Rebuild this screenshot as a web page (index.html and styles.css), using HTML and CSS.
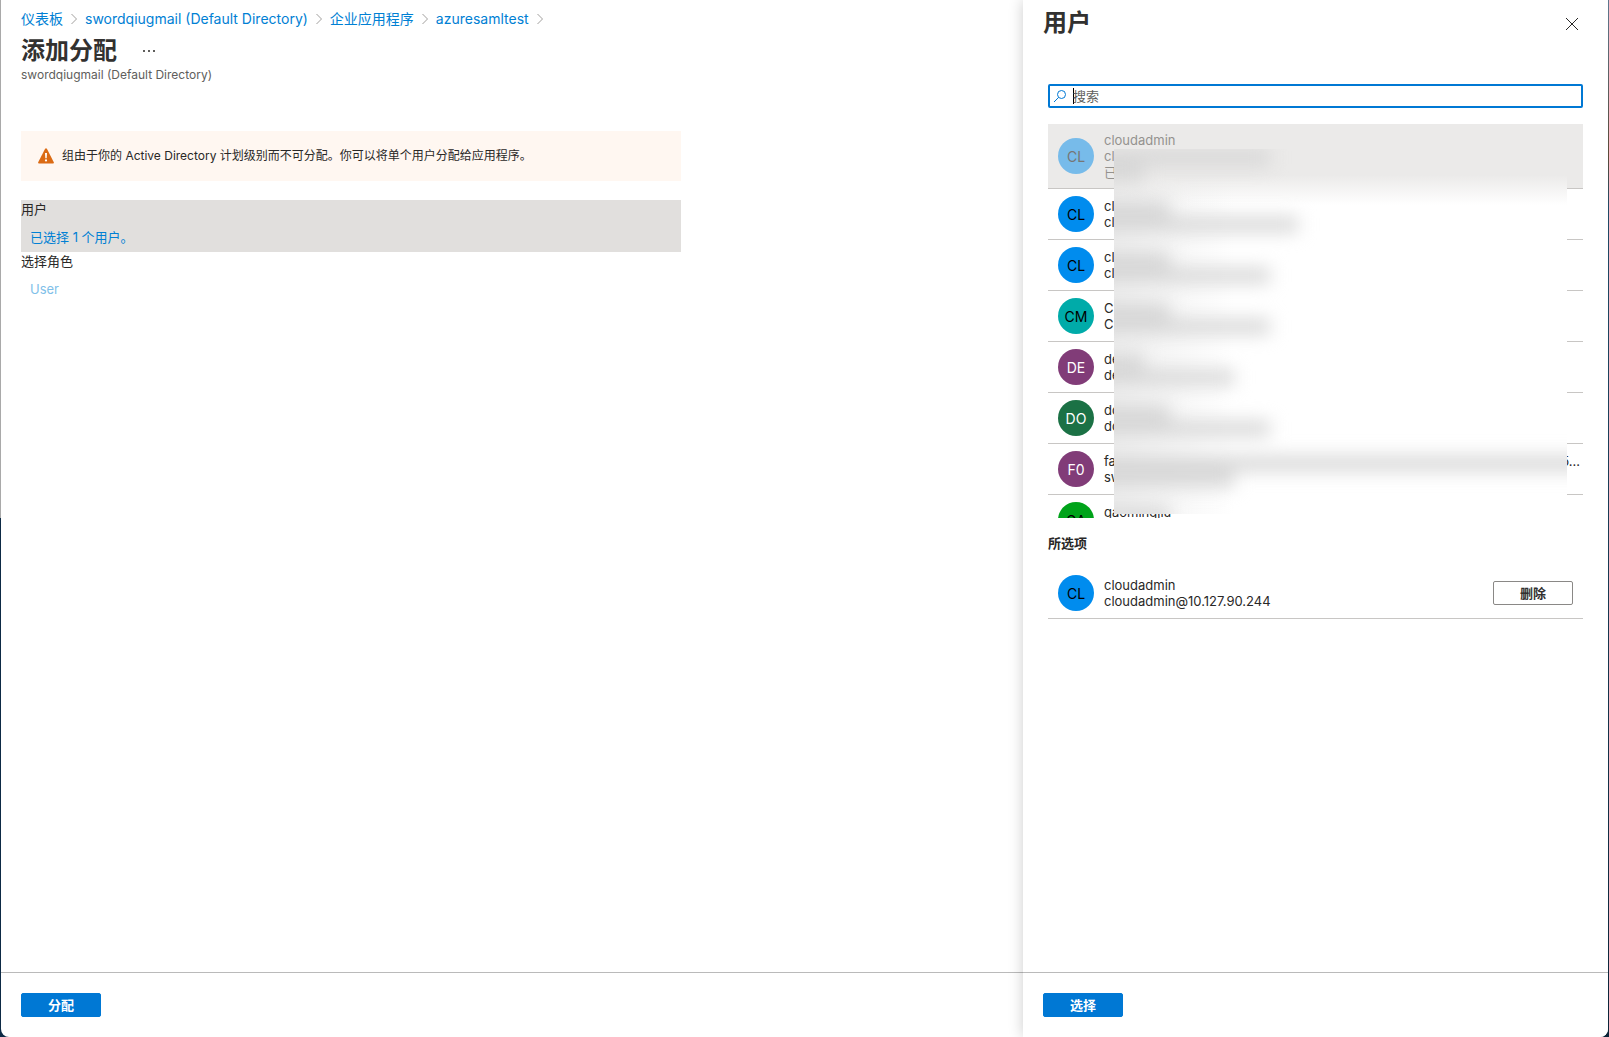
FILE: index.html
```html
<!DOCTYPE html>
<html lang="zh-CN">
<head>
    <meta charset="UTF-8">
    <meta name="viewport" content="width=device-width, initial-scale=1.0">
    <title>添加分配</title>
    <link rel="stylesheet" href="styles.css">
</head>
<body>
    <div class="window">
        <!-- Assignment blade -->
        <main class="blade">
            <nav class="breadcrumb">
                <a href="#">仪表板</a>
                <svg class="chevron" viewBox="0 0 6 12"><path d="M0.5 1L5.5 6L0.5 11"/></svg>
                <a href="#">swordqiugmail (Default Directory)</a>
                <svg class="chevron" viewBox="0 0 6 12"><path d="M0.5 1L5.5 6L0.5 11"/></svg>
                <a href="#">企业应用程序</a>
                <svg class="chevron" viewBox="0 0 6 12"><path d="M0.5 1L5.5 6L0.5 11"/></svg>
                <a href="#">azuresamltest</a>
                <svg class="chevron" viewBox="0 0 6 12"><path d="M0.5 1L5.5 6L0.5 11"/></svg>
            </nav>
            <header class="blade-header">
                <div class="title-row">
                    <h1>添加分配</h1>
                    <button class="more" type="button" aria-label="更多">
                        <svg viewBox="0 0 12 2"><path d="M0 0h2v2H0zM5 0h2v2H5zM10 0h2v2h-2z"/></svg>
                    </button>
                </div>
                <p class="subtitle">swordqiugmail (Default Directory)</p>
            </header>

            <div class="warning">
                <svg class="warning-icon" viewBox="0 0 16 16">
                    <path fill="#db6b14" d="M7.1 0.8Q8 -0.5 8.9 0.8L15.8 14.3Q16.2 15.5 15 15.5H1Q-0.2 15.5 0.2 14.3Z"/>
                    <path fill="#fff" d="M7 5h2l-0.3 5.2H7.3z"/>
                    <circle cx="8" cy="12.4" r="1.1" fill="#fff"/>
                </svg>
                <span>组由于你的 Active Directory 计划级别而不可分配。你可以将单个用户分配给应用程序。</span>
            </div>

            <section class="field selected">
                <h2>用户</h2>
                <a href="#">已选择 1 个用户。</a>
            </section>
            <section class="field disabled">
                <h2>选择角色</h2>
                <a href="#">User</a>
            </section>

            <footer class="blade-footer">
                <button class="primary" type="button">分配</button>
            </footer>
        </main>

        <!-- User picker blade -->
        <aside class="blade picker">
            <header class="picker-header">
                <h1>用户</h1>
                <button class="close" type="button" aria-label="关闭">
                    <svg viewBox="0 0 14 14"><path d="M1 1L13 13M13 1L1 13"/></svg>
                </button>
            </header>

            <div class="picker-body">
                <label class="search">
                    <svg viewBox="0 0 14 14"><circle cx="8.5" cy="5.5" r="4"/><path d="M5.6 8.4L1 13"/></svg>
                    <span class="caret"></span>
                    <input type="text" placeholder="搜索" aria-label="搜索">
                </label>

                <div class="user-list">
                    <ul>
                        <li class="user assigned">
                            <span class="avatar blue">CL</span>
                            <div class="user-text"><div>cloudadmin</div><div>cl</div><div>已</div></div>
                        </li>
                        <li class="user">
                            <span class="avatar blue">CL</span>
                            <div class="user-text"><div>cl</div><div>cl</div></div>
                        </li>
                        <li class="user">
                            <span class="avatar blue">CL</span>
                            <div class="user-text"><div>cl</div><div>cl</div></div>
                        </li>
                        <li class="user">
                            <span class="avatar teal">CM</span>
                            <div class="user-text"><div>C</div><div>C</div></div>
                        </li>
                        <li class="user">
                            <span class="avatar purple">DE</span>
                            <div class="user-text"><div>de</div><div>de</div></div>
                        </li>
                        <li class="user">
                            <span class="avatar green">DO</span>
                            <div class="user-text"><div>do</div><div>do</div></div>
                        </li>
                        <li class="user">
                            <span class="avatar purple">F0</span>
                            <div class="user-text"><div class="split"><span>fa</span><span>5...</span></div><div>sw</div></div>
                        </li>
                        <li class="user">
                            <span class="avatar lime">GA</span>
                            <div class="user-text"><div>gaomingjiu</div><div>&nbsp;</div></div>
                        </li>
                    </ul>
                    <!-- Privacy mask over names and addresses -->
                    <div class="mask" aria-hidden="true">
                        <div class="smudges">
                            <div class="smudge"><i class="w-170"></i><i class="w-50"></i></div>
                            <div class="smudge"><i class="w-70"></i><i class="w-200"></i></div>
                            <div class="smudge"><i class="w-70"></i><i class="w-170"></i></div>
                            <div class="smudge"><i class="w-70"></i><i class="w-170"></i></div>
                            <div class="smudge"><i class="w-50"></i><i class="w-140"></i></div>
                            <div class="smudge"><i class="w-70"></i><i class="w-170"></i></div>
                            <div class="smudge"><i class="w-full"></i><i class="w-140"></i></div>
                            <div class="smudge"><i class="w-70"></i></div>
                        </div>
                    </div>
                </div>

                <h2 class="picked-title">所选项</h2>
                <ul>
                    <li class="user picked">
                        <span class="avatar blue">CL</span>
                        <div class="user-text"><div>cloudadmin</div><div>cloudadmin@10.127.90.244</div></div>
                        <button class="secondary" type="button">删除</button>
                    </li>
                </ul>
            </div>

            <footer class="blade-footer">
                <button class="primary" type="button">选择</button>
            </footer>
        </aside>
    </div>
</body>
</html>
```
FILE: styles.css
```css
/* General Styles */
* {
    box-sizing: border-box;
}

body {
    margin: 0;
    font-family: Inter, "Noto Sans CJK SC", sans-serif;
    font-size: 13px;
    line-height: 16px;
    color: #292827;
    background:
        linear-gradient(#a9a9a9 50%, #0d2a45 50%) left / 50% 100% no-repeat,
        linear-gradient(#5d7890 0, #5b4a38 15%, #1f4a66 20%, #0b2438 100%) right / 50% 100% no-repeat;
}

h1, h2, p, ul {
    margin: 0;
    padding: 0;
}

ul {
    list-style: none;
}

a {
    color: #0080d4;
    text-decoration: none;
}

button {
    font: inherit;
    padding: 0;
    cursor: pointer;
}

h1 {
    font-size: 24px;
    line-height: 32px;
    font-weight: 700;
    color: #323130;
}

.window {
    display: flex;
    height: 100vh;
    margin: 0 1px;
    background: #fff;
    border-radius: 0 0 8px 8px;
    overflow: hidden;
}

.blade {
    flex: 1;
    display: flex;
    flex-direction: column;
    min-width: 0;
}

/* Breadcrumb and title */
.breadcrumb {
    display: flex;
    align-items: center;
    gap: 8px;
    padding: 9px 20px 0;
    font-size: 14px;
    line-height: 20px;
}

.chevron {
    width: 6px;
    height: 12px;
    fill: none;
    stroke: #a19f9d;
}

.blade-header {
    padding: 6px 20px 0;
}

.title-row {
    display: flex;
    align-items: center;
    gap: 26px;
}

.more {
    display: flex;
    border: 0;
    background: none;
}

.more svg {
    width: 12px;
    height: 2px;
    fill: #605e5c;
}

.subtitle {
    font-size: 12px;
    color: #605e5c;
}

/* Warning banner */
.warning {
    display: flex;
    align-items: center;
    gap: 8px;
    width: 660px;
    max-width: 100%;
    height: 50px;
    margin: 48px 20px 19px;
    padding: 0 17px;
    font-size: 12px;
    background: #fff7f1;
}

.warning-icon {
    width: 16px;
    height: 16px;
}

/* Assignment fields */
.field {
    width: 660px;
    max-width: 100%;
    height: 52px;
    margin: 0 20px;
}

.field h2 {
    padding-top: 1px;
    font-size: 13px;
    font-weight: 400;
}

.field a {
    display: block;
    padding: 12px 9px 0;
}

.field.selected {
    background: #e1dfdd;
}

.field.disabled a {
    color: #7fbfe9;
}

/* Footers */
.blade-footer {
    margin-top: auto;
    padding: 20px;
    border-top: 1px solid #bababa;
}

.primary,
.secondary {
    display: block;
    width: 80px;
    height: 24px;
    border-radius: 2px;
    font-weight: 600;
    line-height: 20px;
}

.primary {
    border: 1px solid #0078d4;
    background: #0078d4;
    color: #fff;
}

.secondary {
    border: 1px solid #8a8886;
    background: #fff;
    color: #323130;
}

/* User picker */
.picker {
    flex: 0 0 585px;
    background: #fff;
    box-shadow: 0 0 14px rgba(0, 0, 0, 0.2);
}

.picker-header {
    display: flex;
    justify-content: space-between;
    padding: 7px 29px 0 20px;
}

.close {
    display: flex;
    align-items: center;
    border: 0;
    background: none;
}

.close svg {
    width: 14px;
    height: 14px;
    margin-top: 2px;
    fill: none;
    stroke: #292827;
}

.picker-body {
    padding: 45px 25px 0;
}

.search {
    display: flex;
    align-items: center;
    height: 24px;
    padding: 0 3px;
    border: 2px solid #0078d4;
    border-radius: 2px;
}

.search svg {
    width: 14px;
    height: 14px;
    margin-right: 6px;
    fill: none;
    stroke: #0078d4;
}

.caret {
    width: 1px;
    height: 16px;
    margin-right: -1px;
    background: #000;
}

.search input {
    flex: 1;
    min-width: 0;
    padding: 0;
    border: 0;
    outline: 0;
    background: none;
    font: inherit;
}

.search input::placeholder {
    color: #605e5c;
}

.user-list {
    position: relative;
    height: 394px;
    margin-top: 16px;
    overflow: hidden;
}

.user {
    display: flex;
    align-items: center;
    gap: 10px;
    padding: 7px 0 7px 10px;
    border-bottom: 1px solid #c8c6c4;
}

.user.assigned {
    padding-top: 8px;
    padding-bottom: 8px;
    background: #ebeae9;
}

.user.assigned .user-text {
    color: #94928f;
}

.user.assigned .avatar {
    background: #77bbea;
    color: #767676;
}

.user.picked {
    padding-right: 10px;
}

.user-text {
    flex: 1;
    min-width: 0;
}

.split {
    display: flex;
    justify-content: space-between;
    padding-right: 3px;
}

.avatar {
    width: 36px;
    height: 36px;
    padding-top: 1px;
    border-radius: 50%;
    font-size: 14px;
    line-height: 36px;
    text-align: center;
    color: #fff;
}

.blue { background: #008cee; color: #000; }
.teal { background: #00aba9; color: #000; }
.purple { background: #813c78; }
.green { background: #1b7145; }
.lime { background: #00a31a; color: #000; }

.picked-title {
    margin: 17px 0;
    font-size: 13px;
    font-weight: 600;
}

/* Privacy mask */
.mask {
    position: absolute;
    top: 25px;
    right: 16px;
    bottom: 4px;
    left: 66px;
    overflow: hidden;
    background:
        linear-gradient(#ebeae9 26px, rgba(255, 255, 255, 0) 56px),
        linear-gradient(90deg, #f0f0f0, #fff 120px);
}

.smudges {
    margin: 0 -20px;
    filter: blur(9px);
}

.smudge {
    height: 51px;
    padding-top: 1px;
}

.smudge i {
    display: block;
    height: 15px;
    margin-bottom: 1px;
    background: #d6d6d6;
}

.w-50 { width: 50px; }
.w-70 { width: 76px; }
.w-140 { width: 140px; }
.w-170 { width: 176px; }
.w-200 { width: 204px; }
.w-full { width: 100%; }
```
